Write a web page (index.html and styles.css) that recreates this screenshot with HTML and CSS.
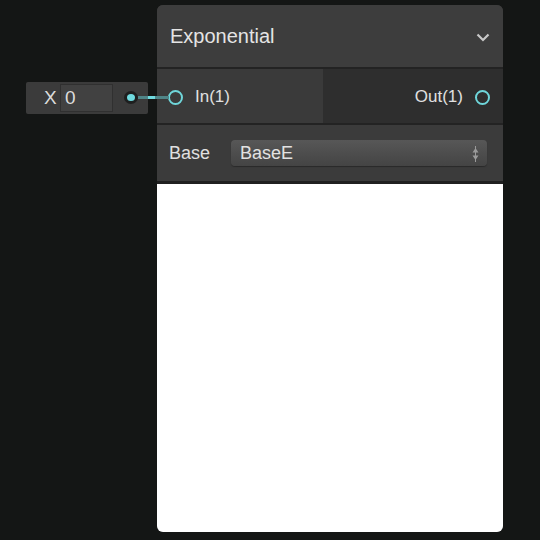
FILE: index.html
```html
<!DOCTYPE html>
<html>
<head>
<meta charset="utf-8">
<link rel="stylesheet" href="styles.css">
</head>
<body>
<div class="canvas">
  <div class="input-widget">
    <span class="x-label">X</span>
    <span class="x-field">0</span>
  </div>
  <div class="node">
    <div class="header">
      <span class="title">Exponential</span>
      <svg class="chev" width="14" height="9" viewBox="0 0 14 9"><path d="M1.5 1.5 L7 7 L12.5 1.5" fill="none" stroke="#c8c8c8" stroke-width="2.2"/></svg>
    </div>
    <div class="ports">
      <div class="port-in">
        <span class="port-circle"></span>
        <span class="port-label">In(1)</span>
      </div>
      <div class="port-out">
        <span class="port-label">Out(1)</span>
        <span class="port-circle"></span>
      </div>
    </div>
    <div class="control">
      <span class="ctl-label">Base</span>
      <div class="select">
        <span>BaseE</span>
        <svg class="updown" width="7" height="16" viewBox="0 0 7 16"><path d="M3.5 2 L6.5 6.5 H0.5 Z M3.5 14 L6.5 9.5 H0.5 Z" fill="#9a9a9a"/><rect x="3" y="0" width="1" height="16" fill="#9a9a9a"/></svg>
      </div>
    </div>
    <div class="preview"></div>
  </div>
  <div class="wire">
    <span class="wire-dot"></span>
    <span class="wire-line"></span>
  </div>
</div>
</body>
</html>
```
FILE: styles.css
```css
* { box-sizing: border-box; }
html, body { margin: 0; padding: 0; }
body {
  width: 540px; height: 540px;
  background: #141615;
  font-family: "Liberation Sans", Arial, sans-serif;
  color: #e2e2e2;
  overflow: hidden;
}
.canvas { position: relative; width: 540px; height: 540px; }
.input-widget {
  position: absolute; left: 26px; top: 82px;
  width: 122px; height: 32px;
  background: #3b3b3b;
  border-radius: 2px;
  display: flex; align-items: center;
}
.x-label { font-size: 19px; margin-left: 18px; width: 16px; color: #dcdcdc; }
.x-field {
  width: 53px; height: 28px;
  background: #414141;
  border: 1px solid #303030;
  font-size: 19px; line-height: 26px; padding-left: 4px;
  color: #dcdcdc;
}
.wire { position: absolute; left: 124px; top: 91px; width: 47px; height: 14px; }
.wire-dot {
  position: absolute; left: 0; top: 0;
  width: 14px; height: 13px; border-radius: 50%;
  background: #6fdadf; border: 3px solid #1e1f1f;
}
.wire-line {
  position: absolute; left: 14px; top: 5px; width: 31px; height: 3px;
  background: #4f8588;
}
.wire-line::after {
  content: ""; position: absolute; left: 10px; top: 0; width: 7px; height: 3px; background: #6fdadf;
}
.node {
  position: absolute; left: 157px; top: 5px;
  width: 346px; height: 527px;
  border-radius: 6px; overflow: hidden;
  background: #3c3c3c;
  display: flex; flex-direction: column;
}
.header {
  height: 64px; flex-shrink: 0; background: #3d3d3d;
  border-bottom: 2px solid #232323;
  display: flex; align-items: center; justify-content: space-between;
  padding: 0 13px 0 13px;
}
.title { font-size: 20px; color: #e4e4e4; }
.chev { margin-top: 2px; }
.ports {
  height: 56px; flex-shrink: 0; display: flex;
  border-bottom: 2px solid #232323;
}
.port-in {
  width: 166px; background: #3a3a3a;
  display: flex; align-items: center; padding-left: 11px; gap: 12px;
  padding-top: 2px;
}
.port-out {
  flex: 1; background: #2e2e2e;
  display: flex; align-items: center; justify-content: flex-end; padding-right: 13px; gap: 12px;
  padding-top: 2px;
}
.port-circle {
  width: 15px; height: 15px; border-radius: 50%;
  border: 2.5px solid #6fd6da;
}
.port-label { font-size: 17px; color: #e0e0e0; }
.control {
  height: 59px; flex-shrink: 0; background: #3b3b3b;
  border-bottom: 3px solid #202020;
  display: flex; align-items: center; padding-left: 12px;
}
.ctl-label { font-size: 18px; color: #e0e0e0; width: 62px; }
.select {
  width: 256px; height: 26px;
  border-radius: 4px;
  background: linear-gradient(#575757, #444444);
  box-shadow: 0 1px 1px #2a2a2a;
  display: flex; align-items: center; justify-content: space-between;
  padding: 0 8px 0 9px;
  font-size: 18px; color: #e2e2e2;
}
.updown { margin-top: 1px; }
.preview { flex: 1; background: #ffffff; }
```
